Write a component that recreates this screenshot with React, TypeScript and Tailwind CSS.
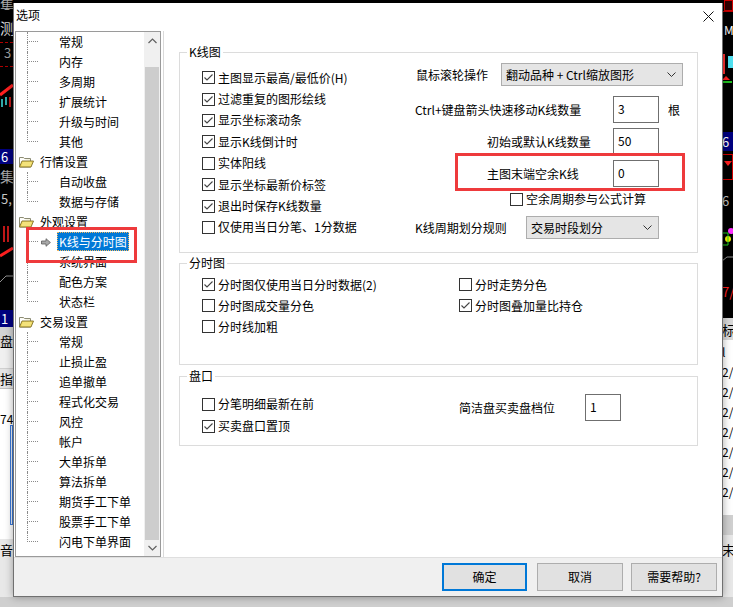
import React from "react";

const tree: { group?: string; items: string[] }[] = [
  { items: ["常规", "内存", "多周期", "扩展统计", "升级与时间", "其他"] },
  { group: "行情设置", items: ["自动收盘", "数据与存储"] },
  { group: "外观设置", items: ["K线与分时图", "系统界面", "配色方案", "状态栏"] },
  {
    group: "交易设置",
    items: ["常规", "止损止盈", "追单撤单", "程式化交易", "风控", "帐户", "大单拆单", "算法拆单", "期货手工下单", "股票手工下单", "闪电下单界面"],
  },
];

const kChecks = [
  { label: "主图显示最高/最低价(H)", on: true },
  { label: "过滤重复的图形绘线", on: true },
  { label: "显示坐标滚动条", on: true },
  { label: "显示K线倒计时", on: true },
  { label: "实体阳线", on: false },
  { label: "显示坐标最新价标签", on: true },
  { label: "退出时保存K线数量", on: true },
  { label: "仅使用当日分笔、1分数据", on: false },
];

function Check({ on }: { on?: boolean }) {
  return (
    <span className="w-[13px] h-[13px] shrink-0 border border-[#333333] bg-white flex items-center justify-center">
      {on && (
        <svg width="11" height="11" viewBox="0 0 11 11">
          <path d="M1.5 5.5 L4 8 L9.5 2.5" fill="none" stroke="#444444" strokeWidth="1.1" />
        </svg>
      )}
    </span>
  );
}

function CheckRow({ label, on, h }: { label: string; on?: boolean; h: string }) {
  return (
    <div className={`${h} flex items-center gap-[3px]`}>
      <Check on={on} />
      <span className="leading-[16px] whitespace-nowrap">{label}</span>
    </div>
  );
}

function Chevron({ up }: { up?: boolean }) {
  return (
    <svg width="9" height="6" viewBox="0 0 9 6">
      <path d={up ? "M0.5 5 L4.5 1 L8.5 5" : "M0.5 1 L4.5 5 L8.5 1"} fill="none" stroke="#606060" strokeWidth="1.2" />
    </svg>
  );
}

function Select({ text, w }: { text: string; w: string }) {
  return (
    <div className={`${w} h-full border border-[#adadad] bg-[#e5e5e5] flex items-center pl-[4px] pr-[6px] justify-between`}>
      <span className="leading-[16px] whitespace-nowrap">{text}</span>
      <svg width="9" height="5" viewBox="0 0 9 5">
        <path d="M0.5 0.5 L4.5 4.5 L8.5 0.5" fill="none" stroke="#333333" strokeWidth="1" />
      </svg>
    </div>
  );
}

function Input({ value, w }: { value: string; w: string }) {
  return (
    <div className={`${w} h-full border border-[#6f6f6f] bg-white pl-[4px] pt-[4px] leading-[16px]`}>{value}</div>
  );
}

function GroupBox({ title, className, children }: { title: string; className: string; children: React.ReactNode }) {
  return (
    <div className={`relative w-[519px] border border-[#dcdcdc] ${className}`}>
      <span className="absolute -top-[9px] left-[7px] bg-white px-[2px] leading-[16px]">{title}</span>
      {children}
    </div>
  );
}

function Folder() {
  return (
    <svg width="15" height="12" viewBox="0 0 15 12">
      <path d="M0.5 1.5 h4 l1 1 h6 v2.5" fill="#f4f1de" stroke="#8c8c74" />
      <path d="M0.5 1.5 v9.5 h11" fill="none" stroke="#8c8c74" />
      <path d="M0.5 11 L3 5 H14.5 L12 11 Z" fill="#efd858" stroke="#8a7a36" />
      <path d="M3.5 7 H12.5 M2.8 9 H11.8" stroke="#fbf2b0" strokeWidth="0.8" />
    </svg>
  );
}

function Arrow() {
  return (
    <svg width="10" height="9" viewBox="0 0 10 9">
      <path d="M0.5 3 H5 V0.7 L9.4 4.5 L5 8.3 V6 H0.5 Z" fill="#a8a8a8" stroke="#5a5a5a" strokeWidth="0.8" />
    </svg>
  );
}

function TreeItem({ label, last, selected }: { label: string; last: boolean; selected: boolean }) {
  return (
    <div className="h-[20px] flex">
      <div className="w-[11px]" />
      <div className="w-[11px] flex flex-col">
        <div className="h-[10px] border-l border-b border-dotted border-[#8a8a8a]" />
        {!last && <div className="flex-1 border-l border-dotted border-[#8a8a8a]" />}
      </div>
      <div className="w-[19px] flex items-center pl-[3px]">{selected && <Arrow />}</div>
      <div className="flex items-start">
        <span
          className={
            selected
              ? "h-[19px] px-[2px] leading-[19px] bg-[#0078d7] text-white outline outline-1 outline-dotted outline-[#f4b860] -outline-offset-1 whitespace-nowrap"
              : "h-[19px] px-[2px] leading-[19px] whitespace-nowrap"
          }
        >
          {label}
        </span>
      </div>
    </div>
  );
}

function Tree() {
  return (
    <div className="ml-[1px] w-[146px] h-full border border-[#9a9a9a] bg-white flex">
      <div className="flex-1 overflow-hidden flex flex-col">
        {tree.map((g, gi) => (
          <React.Fragment key={gi}>
            {g.group && (
              <div className="h-[20px] flex items-center pl-[3px] gap-[6px]">
                <Folder />
                <span className="leading-[16px]">{g.group}</span>
              </div>
            )}
            {g.items.map((it, i) => (
              <TreeItem key={i} label={it} last={i === g.items.length - 1} selected={it === "K线与分时图"} />
            ))}
          </React.Fragment>
        ))}
      </div>
      <div className="w-[16px] bg-[#f0f0f0] flex flex-col">
        <div className="h-[17px] flex items-center justify-center">
          <Chevron up />
        </div>
        <div className="h-[18px]" />
        <div className="flex-1 mx-[1px] bg-[#cdcdcd]" />
        <div className="h-[16px] flex items-center justify-center">
          <Chevron />
        </div>
      </div>
    </div>
  );
}

function LeftBackdrop() {
  return (
    <div className="w-[13px] h-full flex flex-col overflow-hidden leading-none">
      <div className="h-[149px] bg-black flex flex-col overflow-hidden">
        <span className="h-[10px] overflow-hidden text-[14px] leading-[10px] text-[#a8a8a8]">集</span>
        <span className="text-[15px] leading-[16px] text-[#d8d8d8] mt-[10px]">测</span>
        <div className="mt-[6px] border-t border-dashed border-[#b00000]" />
        <span className="text-[13px] leading-[14px] text-[#a0a0a0] pl-[4px] mt-[3px]">3</span>
        <div className="mt-[6px] border-t border-dashed border-[#b00000]" />
        <svg width="13" height="40" viewBox="0 0 13 40" className="mt-[6px]">
          <path d="M0 22 L13 12" stroke="#ff2020" strokeWidth="3" />
          <path d="M2 26 V34 M6 24 V32" stroke="#40e0e0" strokeWidth="1.5" />
          <path d="M10 24 V34" stroke="#ff2020" strokeWidth="1.5" />
        </svg>
      </div>
      <div className="h-[15px] bg-[#000080] text-white text-[13px] leading-[15px] pl-[1px]">6</div>
      <div className="h-[146px] bg-black flex flex-col overflow-hidden">
        <span className="text-[14px] leading-[15px] text-[#a8a8a8] mt-[5px]">集</span>
        <span className="text-[13px] leading-[14px] text-[#c8c8c8] mt-[8px] pl-[1px]">5,</span>
        <svg width="13" height="70" viewBox="0 0 13 70" className="mt-[14px]">
          <path d="M4 6 V22 M8 6 V22" stroke="#ff2020" strokeWidth="1.5" />
          <path d="M0 36 L13 28" stroke="#ff2020" strokeWidth="3" />
          <path d="M0 62 L6 56 H13" stroke="#909090" strokeWidth="1" fill="none" />
        </svg>
      </div>
      <div className="h-[17px] bg-[#000080] text-white text-[13px] leading-[17px] pl-[1px]">1</div>
      <div className="flex-1 bg-[#f0f0f0] flex flex-col text-[13px]">
        <div className="h-[20px] bg-[#d4d4d4] flex items-end">盘</div>
        <div className="h-[22px] border-b border-[#d0d0d0]" />
        <div className="h-[20px] bg-[#e4e4e4] flex items-center border-b border-[#c0c0c0]">指</div>
        <div className="h-[36px] bg-white flex items-end text-[12px]">74</div>
        <div className="h-[100px] bg-white flex">
          <div className="ml-[10px] flex-1 border border-[#3b78d8] bg-[#eef3fa]" />
        </div>
        <div className="h-[14px] bg-white" />
        <div className="flex-1 bg-[#e8e8e8] pt-[4px]">音</div>
      </div>
    </div>
  );
}

function RightBackdrop() {
  return (
    <div className="flex-1 h-full flex flex-col overflow-hidden leading-none text-[13px]">
      <div className="h-[12px] bg-black border-b border-[#c00000] flex justify-end">
        <span className="w-[9px] h-[11px] bg-[#300000] border border-[#d00000]" />
      </div>
      <div className="h-[120px] bg-black flex flex-col">
        <span className="text-white text-[12px] mt-[12px] pl-[2px]">M</span>
        <svg width="11" height="60" viewBox="0 0 11 60" className="mt-[10px]">
          <path d="M2 8 V28" stroke="#ff3030" strokeWidth="2" />
          <path d="M6 10 H11 V22 H6 Z" fill="#50e0f0" />
          <path d="M0 34 L4 30 L8 34 Z" fill="#ff2020" />
          <path d="M0 36 H10" stroke="#20c020" strokeWidth="2" />
        </svg>
      </div>
      <div className="h-[19px] bg-[#000080] text-white text-[13px] flex items-center">6</div>
      <div className="h-[167px] bg-black flex flex-col">
        <div className="h-[26px] mt-[3px] border border-[#d00000] flex items-start justify-center pt-[6px]">
          <span className="w-0 h-0 border-l-[4px] border-r-[4px] border-t-[5px] border-l-transparent border-r-transparent border-t-[#ff2020]" />
        </div>
        <span className="text-[#c0c0c0] mt-[14px]">6</span>
        <svg width="11" height="50" viewBox="0 0 11 50" className="mt-[20px]">
          <circle cx="9" cy="4" r="3" fill="#ff30ff" />
          <circle cx="6" cy="12" r="3" fill="#f0f000" />
          <path d="M0 6 H6 V18 H0" stroke="#20d020" fill="none" />
          <path d="M0 34 L5 30 H11" stroke="#909090" fill="none" />
        </svg>
        <span className="text-[#ff2020] mt-[8px]">7/</span>
      </div>
      <div className="h-[22px] bg-[#d8d8d8] flex items-center">标</div>
      <div className="h-[175px] bg-white flex flex-col pt-[6px] gap-[6px] text-[12px]">
        {["l", "2/", "2/", "2/", "2/", "2/", "2/", "2/"].map((t, i) => (
          <span key={i} className="h-[14px]">
            {t}
          </span>
        ))}
      </div>
      <div className="flex-1 bg-[#e8e8e8] flex flex-col">
        <div className="h-[20px] bg-[#d0d0d0]" />
        <span className="mt-[8px]">末</span>
      </div>
    </div>
  );
}

export default function App() {
  return (
    <div className="relative w-[733px] h-[607px] overflow-hidden bg-[#cfcfcf] font-['Noto_Sans_CJK_SC','Microsoft_YaHei',sans-serif] text-[12px] text-black">
      {/* application behind the dialog */}
      <div className="h-[597px] flex">
        <LeftBackdrop />
        <div className="w-[709px] h-full bg-black" />
        <RightBackdrop />
      </div>

      {/* options dialog */}
      <div className="absolute left-[13px] top-[3px] w-[710px] h-[594px] bg-white border-x border-b border-[#707070] shadow-[0_0_8px_rgba(0,0,0,0.35)] flex flex-col">
        <div className="h-[28px] flex items-start shrink-0">
          <span className="pl-[2px] pt-[4px] leading-[16px]">选项</span>
          <svg width="11" height="11" viewBox="0 0 11 11" className="ml-auto mr-[8px] mt-[8px]">
            <path d="M0.5 0.5 L10.5 10.5 M10.5 0.5 L0.5 10.5" stroke="#111111" strokeWidth="1" />
          </svg>
        </div>

        <div className="h-[526px] flex shrink-0">
          <Tree />

          <div className="ml-[2px] flex-1 border-l border-[#dadada] pl-[15px] pt-[21px] flex flex-col">
            <GroupBox title="K线图" className="h-[201px]">
              <div className="flex h-full">
                <div className="w-[234px] pl-[22px] pt-[14px] flex flex-col">
                  {kChecks.map((c, i) => (
                    <CheckRow key={i} label={c.label} on={c.on} h="h-[21.4px]" />
                  ))}
                </div>
                <div className="flex flex-col pt-[10px]">
                  <div className="h-[23px] flex items-center">
                    <span className="w-[87px] pl-[2px] leading-[16px]">鼠标滚轮操作</span>
                    <Select text="翻动品种 + Ctrl缩放图形" w="w-[182px]" />
                  </div>
                  <div className="mt-[10px] h-[27px] flex items-center">
                    <span className="w-[199px] pl-[1px] leading-[16px] whitespace-nowrap">Ctrl+键盘箭头快速移动K线数量</span>
                    <Input value="3" w="w-[46px]" />
                    <span className="ml-[9px] leading-[16px]">根</span>
                  </div>
                  <div className="mt-[5px] h-[27px] flex items-center">
                    <span className="w-[199px] pl-[73px] leading-[16px] whitespace-nowrap">初始或默认K线数量</span>
                    <Input value="50" w="w-[46px]" />
                  </div>
                  <div className="mt-[5px] h-[27px] flex items-center">
                    <span className="w-[199px] pl-[73px] leading-[16px] whitespace-nowrap">主图末端空余K线</span>
                    <Input value="0" w="w-[46px]" />
                  </div>
                  <div className="mt-[5px] pl-[96px]">
                    <CheckRow label="空余周期参与公式计算" h="h-[14px]" />
                  </div>
                  <div className="mt-[10px] h-[23px] flex items-center">
                    <span className="w-[112px] pl-[1px] leading-[16px] whitespace-nowrap">K线周期划分规则</span>
                    <Select text="交易时段划分" w="w-[133px]" />
                  </div>
                </div>
              </div>
            </GroupBox>

            <GroupBox title="分时图" className="mt-[10px] h-[102px]">
              <div className="flex">
                <div className="w-[279px] pl-[22px] pt-[10px] flex flex-col">
                  <CheckRow label="分时图仅使用当日分时数据(2)" on h="h-[21px]" />
                  <CheckRow label="分时图成交量分色" h="h-[21px]" />
                  <CheckRow label="分时线加粗" h="h-[21px]" />
                </div>
                <div className="pt-[10px] flex flex-col">
                  <CheckRow label="分时走势分色" h="h-[21px]" />
                  <CheckRow label="分时图叠加量比持仓" on h="h-[21px]" />
                </div>
              </div>
            </GroupBox>

            <GroupBox title="盘口" className="mt-[11px] h-[70px]">
              <div className="flex">
                <div className="w-[279px] pl-[22px] pt-[16px] flex flex-col">
                  <CheckRow label="分笔明细最新在前" h="h-[22px]" />
                  <CheckRow label="买卖盘口置顶" on h="h-[22px]" />
                </div>
                <div className="pt-[17px]">
                  <div className="h-[27px] flex items-center">
                    <span className="w-[126px] leading-[16px]">简洁盘买卖盘档位</span>
                    <Input value="1" w="w-[36px]" />
                  </div>
                </div>
              </div>
            </GroupBox>
          </div>
        </div>

        <div className="flex-1 bg-[#f0f0f0] border-t border-[#dfdfdf] flex justify-end items-start pt-[5px] pr-[5px]">
          <button className="w-[85px] h-[28px] border-2 border-[#0078d7] bg-[#e1e1e1] leading-[16px]">确定</button>
          <button className="ml-[10px] w-[86px] h-[28px] border border-[#adadad] bg-[#e1e1e1] leading-[16px]">取消</button>
          <button className="ml-[8px] w-[86px] h-[28px] border border-[#adadad] bg-[#e1e1e1] leading-[16px]">需要帮助?</button>
        </div>
      </div>

      {/* red annotation frames drawn over the screenshot */}
      <div className="absolute left-[26px] top-[227px] w-[111px] h-[36px] border-[3px] border-[#ee3a3c]" />
      <div className="absolute left-[455px] top-[153px] w-[230px] h-[38px] border-[3px] border-[#ee3a3c]" />
    </div>
  );
}
